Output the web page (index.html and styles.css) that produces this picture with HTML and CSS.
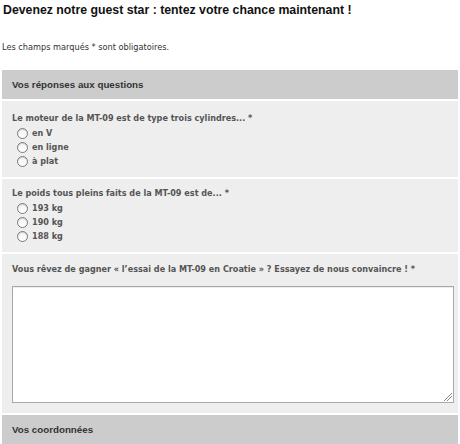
FILE: index.html
```html
<!DOCTYPE html>
<html lang="fr">
<head>
<meta charset="utf-8">
<link rel="stylesheet" href="styles.css">
</head>
<body>
<h1 class="title">Devenez notre guest star : tentez votre chance maintenant !</h1>
<p class="note">Les champs marqués * sont obligatoires.</p>
<form class="form">
  <div class="legend">Vos réponses aux questions</div>
  <div class="section section-first">
    <div class="label">Le moteur de la MT-09 est de type trois cylindres... *</div>
    <label class="option"><span class="radio"></span>en V</label>
    <label class="option"><span class="radio"></span>en ligne</label>
    <label class="option"><span class="radio"></span>à plat</label>
  </div>
  <div class="section section-second">
    <div class="label">Le poids tous pleins faits de la MT-09 est de... *</div>
    <label class="option"><span class="radio"></span>193 kg</label>
    <label class="option"><span class="radio"></span>190 kg</label>
    <label class="option"><span class="radio"></span>188 kg</label>
  </div>
  <div class="section section-text">
    <div class="label">Vous rêvez de gagner « l’essai de la MT-09 en Croatie » ? Essayez de nous convaincre ! *</div>
    <div class="textarea"><span class="grip"></span></div>
  </div>
  <div class="legend">Vos coordonnées</div>
</form>
</body>
</html>
```
FILE: styles.css
```css
html, body {
  margin: 0;
  padding: 0;
  background: #ffffff;
}
body {
  padding: 0 2px;
  font-family: "Liberation Sans", Arial, sans-serif;
}
.title {
  margin: 0;
  padding: 0 1px;
  font-size: 12.3px;
  line-height: 20px;
  font-weight: bold;
  color: #111111;
}
.note {
  margin: 19px 0 0 0;
  font-family: "DejaVu Sans", Verdana, sans-serif;
  font-size: 8.2px;
  line-height: 16px;
  color: #333333;
}
.form {
  margin-top: 15px;
  display: flex;
  flex-direction: column;
  gap: 2px;
}
.legend {
  background: #cccccc;
  height: 29px;
  display: flex;
  align-items: center;
  padding: 0 10px;
  font-size: 9.75px;
  font-weight: bold;
  color: #333333;
}
.section {
  background: #eeeeee;
  padding: 9px 10px 9px 10px;
  display: flex;
  flex-direction: column;
  font-family: "DejaVu Sans", Verdana, sans-serif;
  color: #555555;
}
.section-second {
  padding-top: 6px;
}
.label {
  font-size: 8.1px;
  font-weight: bold;
  line-height: 16px;
}
.option {
  display: flex;
  align-items: center;
  height: 14px;
  padding-left: 5px;
  font-size: 8.1px;
  font-weight: bold;
  gap: 4px;
}
.radio {
  width: 9px;
  height: 9px;
  border: 1px solid #7a7a7a;
  border-radius: 50%;
  background: linear-gradient(#f4f4f4, #ffffff);
  box-shadow: inset 0 1px 1px rgba(0,0,0,0.15);
}
.section-text {
  padding-top: 7px;
  padding-bottom: 10px;
}
.section-text .label {
  margin-bottom: 9px;
}
.textarea {
  position: relative;
  width: 440px;
  height: 115px;
  background: #ffffff;
  border: 1px solid #a9a9a9;
  box-shadow: inset 0 1px 1px rgba(0,0,0,0.08);
}
.grip {
  position: absolute;
  right: 1px;
  bottom: 1px;
  width: 8px;
  height: 8px;
  background: linear-gradient(135deg, transparent 45%, #888 45%, #888 52%, transparent 52%, transparent 68%, #888 68%, #888 75%, transparent 75%);
}
```
